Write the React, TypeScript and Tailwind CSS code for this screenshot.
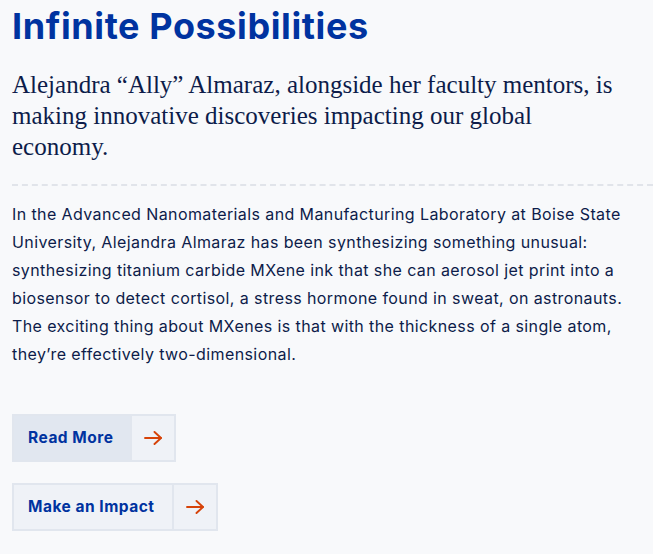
const buttons = [
  { label: "Read More", active: true },
  { label: "Make an Impact", active: false },
];

function Arrow() {
  return (
    <svg width="18" height="14" viewBox="0 0 18 14" fill="none" stroke="#d64309" strokeWidth="1.9" strokeLinecap="round" strokeLinejoin="round">
      <path d="M1 7h16" />
      <path d="M10.5 1l6.5 6-6.5 6" />
    </svg>
  );
}

export default function App() {
  return (
    <div className="min-h-[554px] bg-[#f8f9fb] pl-3 pt-[5px] font-['Inter',sans-serif] text-[#0d1c4a]">
      <h1 className="text-[36px] leading-[42px] font-bold tracking-[0.6px] text-[#0033a0]">
        Infinite Possibilities
      </h1>

      <p className="mt-[22px] pr-[30px] font-['Liberation_Serif',serif] text-[25px] leading-[31px] text-[#0d1c4a]">
        Alejandra “Ally” Almaraz, alongside her faculty mentors, is making innovative discoveries
        impacting our global economy.
      </p>

      <div className="mt-[22px] border-t-2 border-dashed border-[#e1e4ea]" />

      <p className="mt-[14px] pr-6 text-[16px] leading-[28px] tracking-[0.4px]">
        In the Advanced Nanomaterials and Manufacturing Laboratory at Boise State University,
        Alejandra Almaraz has been synthesizing something unusual: synthesizing titanium carbide
        MXene ink that she can aerosol jet print into a biosensor to detect cortisol, a stress
        hormone found in sweat, on astronauts. The exciting thing about MXenes is that with the
        thickness of a single atom, they’re effectively two-dimensional.
      </p>

      <div className="mt-[46px] flex flex-col items-start gap-[21px]">
        {buttons.map((b) => (
          <a
            key={b.label}
            href="#"
            className="flex h-12 items-stretch border-2 border-[#e1e6ee] bg-[#eff2f7]"
          >
            <span
              className={
                "flex items-center pl-[14px] pr-[17px] text-[15.5px] font-bold tracking-[0.5px] text-[#0033a0] " +
                (b.active ? "bg-[#e1e7f0]" : "")
              }
            >
              {b.label}
            </span>
            <span className="flex w-[44px] items-center justify-center border-l-2 border-[#e1e6ee]">
              <Arrow />
            </span>
          </a>
        ))}
      </div>
    </div>
  );
}
